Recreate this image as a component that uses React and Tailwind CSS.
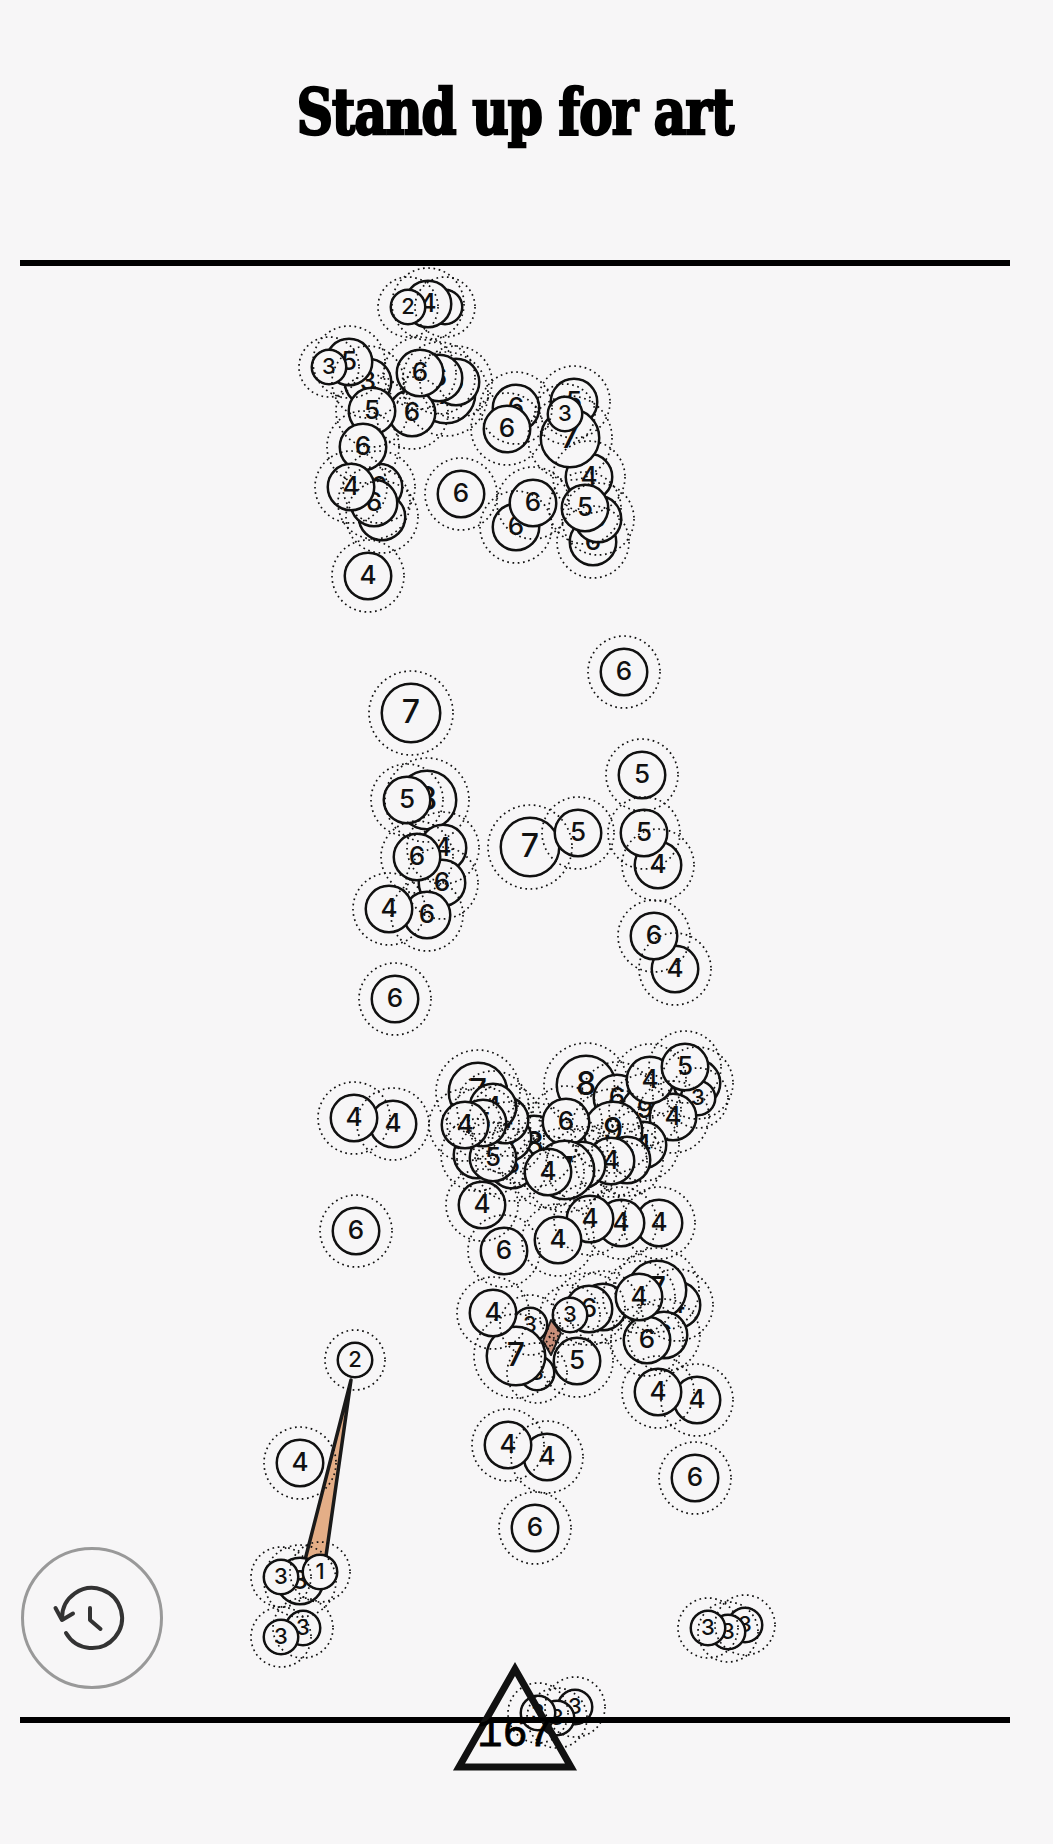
import React from "react";

const nodes = [
  [445,307,18,"3"],[428,304,24,"4"],[408,307,18,"2"],
  [368,382,24,"3"],[349,362,24,"5"],[329,367,18,"3"],
  [446,394,30,"7"],[456,382,24,"6"],[439,378,24,"6"],[412,413,24,"6"],[420,373,24,"6"],
  [372,411,24,"5"],[382,517,24,"6"],[379,487,24,"6"],[374,503,24,"6"],[363,447,24,"6"],[351,487,24,"4"],
  [368,576,24,"4"],[461,494,24,"6"],
  [516,408,24,"6"],[507,429,24,"6"],
  [589,477,24,"4"],[574,402,24,"5"],[570,438,30,"7"],[565,414,18,"3"],
  [593,542,24,"6"],[598,519,24,"6"],[585,508,24,"5"],
  [516,527,24,"6"],[533,503,24,"6"],
  [624,672,24,"6"],[411,713,30,"7"],
  [427,800,30,"8"],[407,800,24,"5"],
  [443,848,24,"4"],[442,883,24,"6"],[417,857,24,"6"],[427,915,24,"6"],[389,909,24,"4"],
  [530,847,30,"7"],[578,833,24,"5"],
  [642,775,24,"5"],[658,865,24,"4"],[644,833,24,"5"],
  [675,969,24,"4"],[654,936,24,"6"],
  [395,999,24,"6"],
  [393,1124,24,"4"],[354,1118,24,"4"],[356,1231,24,"6"],
  [477,1155,24,"4"],[534,1145,30,"8"],[512,1165,24,"5"],[508,1138,24,"5"],[493,1158,24,"5"],
  [478,1092,30,"7"],[505,1120,24,"4"],[493,1107,24,"4"],[483,1123,24,"5"],[465,1125,24,"4"],
  [586,1085,30,"8"],[617,1098,24,"6"],[645,1110,24,"9"],[697,1083,24,"3"],[698,1098,18,"3"],
  [673,1117,24,"4"],[650,1080,24,"4"],[685,1067,24,"5"],
  [643,1145,24,"4"],[613,1131,30,"9"],[566,1122,24,"6"],
  [627,1160,24,"5"],[611,1161,24,"4"],[582,1165,24,"5"],[565,1170,30,"7"],[548,1172,24,"4"],
  [482,1205,24,"4"],[504,1251,24,"6"],
  [659,1223,24,"4"],[621,1223,24,"4"],[590,1219,24,"4"],[558,1240,24,"4"],
  [677,1305,24,"4"],[657,1290,30,"7"],[664,1335,24,"6"],[647,1340,24,"6"],[603,1307,24,"6"],[589,1309,24,"6"],[639,1297,24,"4"],[570,1315,18,"3"],
  [530,1325,18,"3"],[537,1373,18,"3"],[516,1356,30,"7"],[493,1313,24,"4"],[577,1361,24,"5"],
  [697,1400,24,"4"],[658,1392,24,"4"],
  [547,1457,24,"4"],[508,1445,24,"4"],
  [695,1478,24,"6"],[535,1528,24,"6"],
  [355,1360,18,"2"],[300,1463,24,"4"],
  [300,1581,24,"3"],[281,1577,18,"3"],[320,1572,18,"1"],
  [303,1628,18,"3"],[281,1637,18,"3"],
  [745,1625,18,"3"],[728,1632,18,"3"],[708,1628,18,"3"],
  [575,1707,18,"3"],[557,1718,18,"3"],[538,1713,18,"3"],
];

function Node({ x, y, r, n }) {
  const text = r === 18 ? "text-[22px]" : r === 24 ? "text-[26px]" : "text-[32px]";
  return (
    <div
      className={`absolute flex items-center justify-center rounded-full border-2 border-[#111111] bg-[#f7f6f7] pb-0.5 leading-none font-[450] text-[#111111] shadow-[0_0_0_0.5px_#111111] ${text}`}
      style={{ left: x - r, top: y - r, width: r * 2, height: r * 2 }}
    >
      {n}
    </div>
  );
}

export default function App() {
  return (
    <div className="relative h-[1844px] w-full overflow-hidden bg-[#f7f6f7] font-['Inter',sans-serif] text-black">
      <div className="relative z-30 ml-5 flex w-[990px] flex-col">
        <h1 className="h-[260px] scale-x-[0.87] pt-[72px] text-center font-['DejaVu_Serif_Condensed','DejaVu_Serif',serif] text-[64px] leading-[80px] font-bold tracking-[-1px] [-webkit-text-stroke:2.5px_black]">
          Stand up for art
        </h1>
        <div className="h-1.5 bg-black" />
        <div className="h-[1451px]" />
        <div className="h-1.5 bg-black" />
      </div>

      <div className="absolute inset-0 z-10">
        <svg className="absolute inset-0" width="1053" height="1844" fill="none">
          <polygon points="351,1380 305,1560 326,1556" fill="#e4ae87" stroke="#1a1a1a" strokeWidth="3.5" strokeLinejoin="round" />
          <polygon points="551,1320 561,1333 551,1355 543,1341" fill="#c98f7a" stroke="#1a1a1a" strokeWidth="2" strokeLinejoin="round" />
        </svg>
        {nodes.map(([x, y, r, n], i) => (
          <Node key={i} x={x} y={y} r={r} n={n} />
        ))}
        <svg className="absolute inset-0" width="1053" height="1844" fill="none">
          {nodes.map(([x, y, r], i) => (
            <circle key={i} cx={x} cy={y} r={r + 12} stroke="#111111" strokeWidth="1.7" strokeDasharray="1.7 3.6" />
          ))}
        </svg>
      </div>

      <div className="absolute top-[1547px] left-[21px] z-30 h-[142px] w-[142px] rounded-full border-[3px] border-[#999999]" />
      <svg className="absolute inset-0 z-30" width="1053" height="1844" fill="none">
        <g stroke="#333333" strokeWidth="4" strokeLinecap="round" strokeLinejoin="round">
          <path d="M66 1633 A30 30 0 1 0 62 1618" />
          <path d="M55.500 1608 L62 1620 L73 1613.500" />
          <path d="M90 1608 V1620 L100.500 1629" />
        </g>
        <polygon points="515,1669 459,1767 571,1767" stroke="#111111" strokeWidth="7" strokeLinejoin="miter" />
      </svg>
      <div className="absolute top-[1713px] left-[455px] z-30 w-[120px] text-center font-['Liberation_Mono',monospace] text-[42px] leading-[45px] text-black [-webkit-text-stroke:0.8px_black]">
        167
      </div>
    </div>
  );
}
